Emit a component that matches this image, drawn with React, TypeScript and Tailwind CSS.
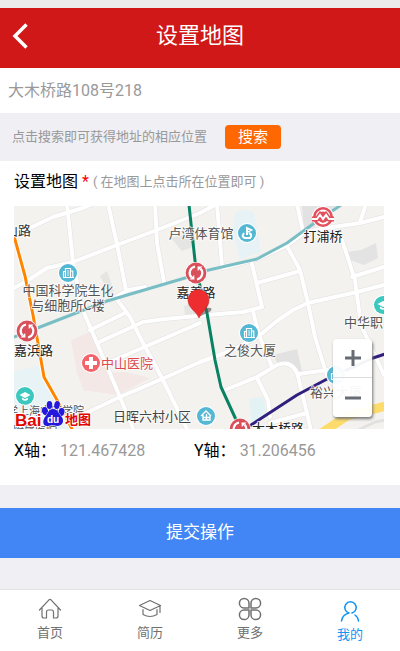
import { useState } from 'react';

const roads = [
  'M14 236 L30 228 L53 217 L83 208 L92 204',
  'M67 204 L73 262 L82 308 L97 343 L120 397 L134 431',
  'M108 204 L117 244 L126 290',
  'M116 298 L130 317 L143 343 L162 378 L188 431',
  'M155 204 L157 243 L164 282',
  'M14 288 L30 279 L47 268 L73 262 L117 245 L157 230 L200 213 L217 204',
  'M217 204 L222 266',
  'M223 268 L257 259 L288 245 L305 232 L333 227 L360 223 L384 217',
  'M297 204 L303 232',
  'M288 248 L300 270 L308 303 L315 337 L328 379',
  'M366 204 L360 222',
  'M342 240 L355 280 L361 325 L384 375',
  'M252 264 L262 307',
  'M253 311 L259 335 L272 367',
  'M257 283 L300 271',
  'M352 277 L384 267',
  'M384 285 L357 292 L308 303 L293 310 L277 321 L260 335 L233 350 L200 362 L162 379 L120 397 L86 413',
  'M207 315 L243 312 L262 307',
  'M90 330 L125 313',
  'M97 343 L143 322 L165 319 L207 315',
  'M112 361 L200 323',
  'M225 390 L257 377 L277 365 Q287 361 293 367 Q298 372 299 381 L307 413 L311 431',
  'M299 374 L327 370',
  'M257 378 L268 400 L270 417',
  'M270 423 L307 413',
  'M110 300 L128 290 L145 287',
];

const mapLabels = [
  { text: '山路', x: 5, y: 235, anchor: 'start', size: 13, color: '#333333' },
  { text: '卢湾体育馆', x: 201, y: 238, anchor: 'middle', size: 13, color: '#555555' },
  { text: '打浦桥', x: 323, y: 241, anchor: 'middle', size: 13, color: '#222222' },
  { text: '中国科学院生化', x: 68, y: 295, anchor: 'middle', size: 13, color: '#555555' },
  { text: '与细胞所C楼', x: 68, y: 310, anchor: 'middle', size: 13, color: '#555555' },
  { text: '嘉善路', x: 196, y: 297, anchor: 'middle', size: 13, color: '#222222' },
  { text: '嘉浜路', x: 14, y: 355, anchor: 'start', size: 13, color: '#222222' },
  { text: '中山医院', x: 101, y: 368, anchor: 'start', size: 13, color: '#dc4a4f' },
  { text: '之俊大厦', x: 250, y: 355, anchor: 'middle', size: 13, color: '#555555' },
  { text: '中华职', x: 344, y: 327, anchor: 'start', size: 13, color: '#555555' },
  { text: '裕兴大厦', x: 310, y: 397, anchor: 'start', size: 13, color: '#555555' },
  { text: '日晖六村小区', x: 113, y: 421, anchor: 'start', size: 13, color: '#444444' },
  { text: '学上海中医学院', x: 7, y: 415, anchor: 'start', size: 11, color: '#555555' },
  { text: '附属医院', x: 13, y: 435, anchor: 'start', size: 11, color: '#555555' },
  { text: '大木桥路', x: 252, y: 433, anchor: 'start', size: 13, color: '#222222' },
] as const;

interface PinProps {
  x: number;
  y: number;
}

function MetroTransfer({ x, y }: PinProps) {
  return (
    <g transform={`translate(${x} ${y})`}>
      <circle r="11" fill="#fff" />
      <circle r="10.400" fill="#d9505a" />
      <path d="M-1 -6.500 A6.600 6.600 0 0 0 -4.500 4.500" fill="none" stroke="#fff" strokeWidth="2.200" />
      <path d="M1 6.500 A6.600 6.600 0 0 0 4.500 -4.500" fill="none" stroke="#fff" strokeWidth="2.200" />
      <path d="M-6.500 6.500 L-1.500 6.500 L-1.800 2 Z M6.500 -6.500 L1.500 -6.500 L1.800 -2 Z" fill="#fff" />
    </g>
  );
}

function Building({ x, y }: PinProps) {
  return (
    <g transform={`translate(${x} ${y})`}>
      <circle r="10" fill="#fff" />
      <circle r="9" fill="#54b7d3" />
      <path
        d="M-5 4.500 H6 M-2.500 4 V-4.500 H2.500 V4 M-4.500 4 V-1.500 H-2.500 M2.500 -2 H4.800 V4 M-0.800 -2 H1 M-0.800 0 H1 M-0.800 2 H1"
        fill="none"
        stroke="#fff"
        strokeWidth="1.200"
      />
    </g>
  );
}

function School({ x, y }: PinProps) {
  return (
    <g transform={`translate(${x} ${y})`}>
      <circle r="10" fill="#fff" />
      <circle r="9" fill="#3cc8be" />
      <path d="M-5.500 -1 L0 -4 L5.500 -1 L0 2 Z M-3 1.500 L0 3.200 L3 1.500 V3.500 Q0 6 -3 3.500 Z" fill="#fff" />
    </g>
  );
}

function BaiduLogo() {
  return (
    <g fontFamily="'Liberation Sans', sans-serif" fontWeight="700">
      <g stroke="#fff" strokeWidth="2" paintOrder="stroke" strokeLinejoin="round">
        <text x="15" y="426" fontSize="17" fill="#e10601">Bai</text>
        <text x="65" y="424" fontSize="13" fill="#e10601" fontFamily="'Noto Sans CJK SC', sans-serif">地图</text>
      </g>
      <g fill="#2319dc" stroke="#fff" strokeWidth="1" paintOrder="stroke">
        <ellipse cx="45" cy="411" rx="3" ry="4" transform="rotate(-12 45 411)" />
        <ellipse cx="49.500" cy="405" rx="2.800" ry="4" />
        <ellipse cx="57" cy="405" rx="2.800" ry="4" transform="rotate(10 57 405)" />
        <ellipse cx="61.500" cy="412" rx="3" ry="4" transform="rotate(12 61.500 412)" />
        <path d="M53 409 C58 409 58 413 61 416 C65 420 63 426 57 426 C54 425 51 425 48 426 C43 427 42 421 45 417 C48 414 48 409 53 409 Z" />
      </g>
      <text x="47" y="423" fontSize="10" fill="#fff">du</text>
    </g>
  );
}

function CityMap() {
  return (
    <svg
      viewBox="14 206 370 223"
      preserveAspectRatio="xMidYMid slice"
      className="block h-auto w-full"
      role="img"
      aria-label="地图"
    >
      <rect x="14" y="206" width="370" height="223" fill="#f3f2ef" />

      {/* blocks */}
      <path d="M235 213 Q244 207 254 213 L261 252 L240 259 L233 231 Z" fill="#e6f2f5" />
      <path d="M14 372 L38 365 L43 379 L56 401 L72 429 H14 Z" fill="#e8f3f6" />
      <path d="M249 399 L263 397 L267 417 L252 422 Z" fill="#e3f2f5" />
      <path d="M71 340 L90 332 L109 373 L125 372 L150 378 L118 395 L90 391 L84 391 L77 373 Z" fill="#f3e8e6" />
      <path d="M347 252 L361 250 L376 243 L378 258 L364 265 L350 260 Z" fill="#e3e3e3" />
      <path d="M302 206 H336 L314 227 L304 229 Z" fill="#e2e2e2" />
      <path d="M273 355 L297 349 L302 371 L298 372 Q292 361 278 364 Z" fill="#e2e2e2" />
      <path d="M171 238 L190 233 L193 247 L182 251 Z M100 276 L107 271 L114 291 L109 294 Z M184 306 L197 301 V314 L185 315 Z" fill="#e5e5e4" />

      {/* roads */}
      <g fill="none" strokeLinejoin="round" strokeLinecap="round">
        {roads.map((d) => (
          <path key={d} d={d} stroke="#e2e1e1" strokeWidth="5" />
        ))}
        {roads.map((d) => (
          <path key={d} d={d} stroke="#fff" strokeWidth="4" />
        ))}
        <path d="M360 429 L375 422 L386 420" stroke="#e2e1e1" strokeWidth="3" />
        <path d="M320 434 L347 416 L386 406" stroke="#fddc6c" strokeWidth="9" />
      </g>

      {/* metro lines */}
      <g fill="none" strokeWidth="3" strokeLinejoin="round">
        <path d="M14 337 L40 327 L107 301 L185 278 L200 272 L257 259 L287 243 L313 224 L341 205" stroke="#79bec4" />
        <path d="M14 236 L25 276 L33 315 L44 377 L57 400 L73 431" stroke="#fff" strokeWidth="5" />
        <path d="M14 236 L25 276 L33 315 L44 377 L57 400 L73 431" stroke="#ff8500" />
        <path d="M189 205 L196 270 L207 313 L215 360 L221 387 L238 424" stroke="#098264" />
        <path d="M248 427 L297 395 L329 378 L373 358 L385 354" stroke="#311f7d" />
      </g>

      {/* places */}
      <Building x={68} y={273} />
      <Building x={249} y={333} />
      <Building x={336} y={375} />
      <School x={25} y={396} />
      <School x={383} y={305} />
      <circle cx="247" cy="233" r="10" fill="#fff" />
      <circle cx="247" cy="233" r="9" fill="#54b7d3" />
      <path d="M247 235 V228 L251 230 L247 232 M244 233 Q241 237 245 238 H250 Q253 235 249 233" fill="none" stroke="#fff" strokeWidth="2" />
      <circle cx="206" cy="416" r="10" fill="#fff" />
      <circle cx="206" cy="416" r="9" fill="#54b7d3" />
      <path d="M201 416 L206 411 L211 416 M203 415 V420 H210 V415 M203 417.500 H210 M206.500 414 V420" fill="none" stroke="#fff" strokeWidth="1.400" />
      <circle cx="91" cy="363" r="10" fill="#fff" />
      <circle cx="91" cy="363" r="9" fill="#f3636c" />
      <path d="M91 357 V369 M85 363 H97" stroke="#fff" strokeWidth="4" />

      <MetroTransfer x={27} y={331} />
      <MetroTransfer x={196} y={273} />
      <MetroTransfer x={240} y={429} />
      <circle cx="323" cy="217" r="11" fill="#fff" />
      <circle cx="323" cy="217" r="10" fill="#e34f5c" />
      <circle cx="323" cy="217" r="6.500" fill="none" stroke="#fff" strokeWidth="1.800" />
      <path d="M312 219 H317 L320 215 L323 219 L326 215 L329 219 H334" fill="none" stroke="#e34f5c" strokeWidth="5" />
      <path d="M312 219 H317 L320 215 L323 219 L326 215 L329 219 H334" fill="none" stroke="#fff" strokeWidth="2" />

      <g
        fontFamily="'Noto Sans CJK SC', sans-serif"
        stroke="#fff"
        strokeOpacity="0.700"
        strokeWidth="2"
        strokeLinejoin="round"
        paintOrder="stroke"
      >
        {mapLabels.map((label) => (
          <text
            key={label.text}
            x={label.x}
            y={label.y}
            textAnchor={label.anchor}
            fontSize={label.size}
            fill={label.color}
          >
            {label.text}
          </text>
        ))}
      </g>

      {/* marker */}
      <path d="M199 317 Q204 306 211 308 Q213 311 207 313 Z" fill="#555" opacity="0.600" />
      <path
        d="M199 318 C196 311 188 308 188 300 A10.500 10.500 0 0 1 209 300 C209 308 202 311 199 318 Z"
        fill="#ed2d2f"
        stroke="#c41f22"
        strokeWidth="0.500"
      />
      <BaiduLogo />
    </svg>
  );
}

const iconProps = {
  viewBox: '0 0 24 24',
  fill: 'none',
  stroke: 'currentColor',
  strokeWidth: 1.2,
  strokeLinecap: 'round',
  strokeLinejoin: 'round',
  className: 'size-6',
  'aria-hidden': true,
} as const;

const tabs = [
  {
    label: '首页',
    icon: (
      <svg {...iconProps}>
        <path d="M1.500 13 L11 2.800 Q12 2 13 2.800 L22.500 13 M4 11 V19 Q4 21 6 21 H8.500 V15 Q8.500 13 10.500 13 H13.500 Q15.500 13 15.500 15 V21 H18 Q20 21 20 19 V11" />
      </svg>
    ),
  },
  {
    label: '简历',
    icon: (
      <svg {...iconProps}>
        <path d="M1.500 8.500 L12 3.500 L22.500 8.500 L12 13.500 Z M22 9 V15.500 M5 12.500 V17.500 Q12 21.500 19 17.500 V12.500" />
      </svg>
    ),
  },
  {
    label: '更多',
    icon: (
      <svg {...iconProps} strokeWidth={1.5}>
        <path d="M11 11 H6 A4.800 4.800 0 1 1 11 6 Z M13 11 V6 A4.800 4.800 0 1 1 18 11 Z M11 13 V18 A4.800 4.800 0 1 1 6 13 Z M13 13 H18 A4.800 4.800 0 1 1 13 18 Z" />
      </svg>
    ),
  },
  {
    label: '我的',
    icon: (
      <svg {...iconProps} strokeWidth={1.5}>
        <path d="M11 14 A5.700 5.700 0 1 1 14 14 M3.500 22 Q4.500 15.500 11 14 M17 16 Q20 18 20.500 22" />
      </svg>
    ),
  },
];

export default function App() {
  const [address, setAddress] = useState('大木桥路108号218');

  return (
    <div className="flex min-h-screen flex-col bg-[#efeff4] font-[Roboto,'Noto_Sans_CJK_SC',sans-serif] text-black">
      <header className="grid grid-cols-[48px_1fr_48px] items-center border-t-8 border-[#ececec] bg-[#cf1817] pt-2 pb-3">
        <button type="button" aria-label="返回" className="flex h-10 items-center pl-3 text-white">
          <svg viewBox="0 0 16 26" className="h-7 w-4" fill="none" stroke="currentColor" strokeWidth="3.500">
            <path d="M14.500 1.500 L3 13 L14.500 24.500" />
          </svg>
        </button>
        <h1 className="text-center text-[22px] leading-10 text-white">设置地图</h1>
      </header>

      <input
        aria-label="地址"
        className="h-[45px] w-full bg-white px-2 pb-1 text-base text-[#999999] outline-none"
        value={address}
        onChange={(e) => setAddress(e.target.value)}
      />

      <div className="flex h-12 items-center gap-[18px] px-3 text-[13px] text-[#999999]">
        <span>点击搜索即可获得地址的相应位置</span>
        <button type="button" className="h-6 w-14 rounded-sm bg-[#ff6700] text-[15px] leading-5 text-white">
          搜索
        </button>
      </div>

      <main className="bg-white pr-4 pb-[22px] pl-[14px]">
        <h2 className="flex h-[45px] items-center gap-1 pb-1 text-base">
          设置地图 <span className="text-[#ff0000]">*</span>
          <span className="text-[13px] text-[#999999]">( 在地图上点击所在位置即可 )</span>
        </h2>

        <div className="relative">
          <CityMap />
          <div className="absolute right-3 bottom-3 flex w-[39px] flex-col rounded bg-white/95 text-[#666b74] shadow-[1px_2px_3px_#777777]">
            <button type="button" aria-label="放大" className="flex h-[39px] items-center justify-center border-b border-[#dddddd]">
              <svg viewBox="0 0 16 16" className="size-4" stroke="currentColor" strokeWidth="3">
                <path d="M8 0 V16 M0 8 H16" />
              </svg>
            </button>
            <button type="button" aria-label="缩小" className="flex h-[39px] items-center justify-center">
              <svg viewBox="0 0 16 16" className="size-4" stroke="currentColor" strokeWidth="3">
                <path d="M0 8 H16" />
              </svg>
            </button>
          </div>
        </div>

        <dl className="grid grid-cols-[180px_1fr] pt-[10px] text-base leading-6">
          <div className="flex gap-1">
            <dt>X轴：</dt>
            <dd className="text-[#999999]">121.467428</dd>
          </div>
          <div className="flex gap-1">
            <dt>Y轴：</dt>
            <dd className="text-[#999999]">31.206456</dd>
          </div>
        </dl>
      </main>

      <button type="button" className="mt-[23px] h-[50px] w-full bg-[#4285f4] text-[17px] text-white">
        提交操作
      </button>

      <nav className="mt-auto grid grid-cols-4 border-t border-[#e2e2e4] bg-white">
        {tabs.map((tab) => (
          <a
            key={tab.label}
            href="#"
            className={`flex h-[61px] flex-col items-center text-[13px] leading-6 ${
              tab.label === '我的' ? 'pt-[9px] text-[#1296f3]' : 'pt-[7px] text-[#707070]'
            }`}
          >
            {tab.icon}
            {tab.label}
          </a>
        ))}
      </nav>
    </div>
  );
}
